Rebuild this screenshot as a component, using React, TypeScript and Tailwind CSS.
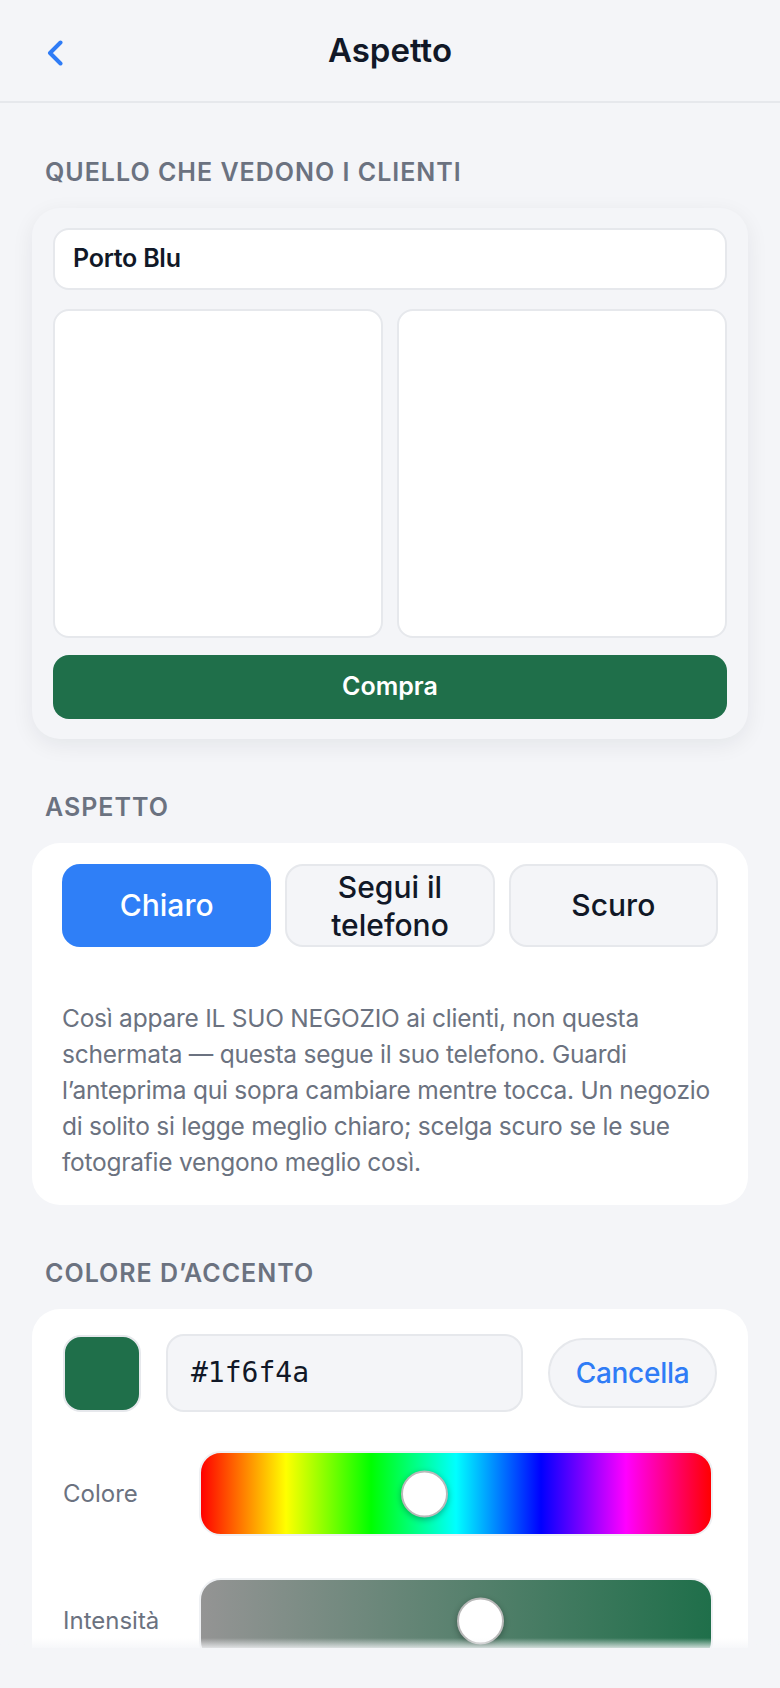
import React from 'react';

const sans = { fontFamily: 'Inter, "Noto Sans", sans-serif' };

function SectionLabel({ children, first }: { children: React.ReactNode; first?: boolean }) {
  return (
    <div
      className={`${first ? '' : 'mt-[52px]'} mb-[20px] pl-[13px] text-[25px] leading-[32px] font-semibold uppercase tracking-[0.04em] text-[#6b7280]`}
    >
      {children}
    </div>
  );
}

function Preview() {
  return (
    <div className="rounded-[28px] bg-[#f4f5f8] px-[21px] pt-[20px] pb-[20px] shadow-[0_6px_22px_rgba(15,23,42,0.07)]">
      <div className="flex h-[62px] items-center rounded-[16px] border-2 border-[#e6e8ec] bg-white px-[18px] text-[25px] font-semibold tracking-[-0.01em] text-[#111827]">
        Porto Blu
      </div>
      <div className="mt-[19px] grid grid-cols-2 gap-[14px]">
        <div className="h-[329px] rounded-[16px] border-2 border-[#e6e8ec] bg-white" />
        <div className="h-[329px] rounded-[16px] border-2 border-[#e6e8ec] bg-white" />
      </div>
      <button className="mt-[17px] flex h-[64px] w-full items-center justify-center rounded-[16px] bg-[#1f6f4a] text-[25px] font-semibold text-white">
        Compra
      </button>
    </div>
  );
}

function ThemePicker() {
  return (
    <div className="rounded-[28px] bg-white px-[30px] pt-[21px] pb-[25px]">
      <div className="grid grid-cols-3 gap-[14px]">
        <button className="flex h-[83px] items-center justify-center rounded-[18px] bg-[#2f7ff7] text-[30px] font-medium text-white">
          Chiaro
        </button>
        <button className="flex h-[83px] items-center justify-center rounded-[18px] border-2 border-[#e6e8ec] bg-[#f4f5f8] text-center text-[30px] leading-[38px] font-medium text-[#111827]">
          Segui il
          <br />
          telefono
        </button>
        <button className="flex h-[83px] items-center justify-center rounded-[18px] border-2 border-[#e6e8ec] bg-[#f4f5f8] text-[30px] font-medium text-[#111827]">
          Scuro
        </button>
      </div>
      <p className="mt-[53px] text-[24.5px] leading-[36px] tracking-[-0.01em] text-[#6b7280]">
        Così appare IL SUO NEGOZIO ai clienti, non questa schermata — questa segue il suo telefono. Guardi
        l’anteprima qui sopra cambiare mentre tocca. Un negozio di solito si legge meglio chiaro; scelga scuro se le
        sue fotografie vengono meglio così.
      </p>
    </div>
  );
}

function Thumb({ left }: { left: number }) {
  return (
    <div
      className="absolute top-1/2 h-[47px] w-[47px] -translate-y-1/2 rounded-full border-2 border-[#b9b9b9] bg-white shadow-[0_2px_6px_rgba(0,0,0,0.3)]"
      style={{ left }}
    />
  );
}

function AccentColor() {
  return (
    <div className="rounded-t-[28px] bg-white px-[31px] pt-[25px] pb-[40px]">
      <div className="flex items-center gap-[25px]">
        <div className="h-[77px] w-[78px] shrink-0 rounded-[18px] border-2 border-[#e6e8ec] bg-[#1f6f4a]" />
        <div
          className="flex h-[78px] flex-1 items-center rounded-[18px] border-2 border-[#e6e8ec] bg-[#f4f5f8] px-[23px] text-[28px] text-[#111827]"
          style={{ fontFamily: '"DejaVu Sans Mono", "Liberation Mono", monospace' }}
        >
          #1f6f4a
        </div>
        <button className="flex h-[70px] w-[169px] shrink-0 items-center justify-center rounded-full border-2 border-[#e6e8ec] bg-[#f4f5f8] text-[28px] font-medium tracking-[-0.01em] text-[#2f7cf6]">
          Cancella
        </button>
      </div>

      <div className="mt-[39px] flex items-center">
        <div className="w-[136px] text-[24px] text-[#6b7280]">Colore</div>
        <div className="relative h-[85px] w-[514px] rounded-[22px] border-2 border-[#eef0f3] bg-[linear-gradient(to_right,#ff0000,#ffff00,#00ff00,#00ffff,#0000ff,#ff00ff,#ff0000)]">
          <Thumb left={200} />
        </div>
      </div>

      <div className="mt-[42px] flex items-center">
        <div className="w-[136px] text-[24px] text-[#6b7280]">Intensità</div>
        <div className="relative h-[85px] w-[514px] rounded-[22px] border-2 border-[#eef0f3] bg-[linear-gradient(to_right,#949494,#1f6f4a)]">
          <Thumb left={256} />
        </div>
      </div>
    </div>
  );
}

export default function App() {
  return (
    <div className="flex h-[1688px] w-full flex-col overflow-hidden bg-[#f4f5f8]" style={sans}>
      <header className="grid h-[103px] shrink-0 grid-cols-[1fr_auto_1fr] items-center border-b-2 border-[#e6e8ec]">
        <button className="pl-[46px] pt-[4px]" aria-label="Indietro">
          <svg width="18" height="26" viewBox="0 0 18 26" fill="none">
            <path d="M14.5 2.5 L4 13 L14.5 23.5" stroke="#2f7cf6" strokeWidth="4" strokeLinecap="round" strokeLinejoin="round" />
          </svg>
        </button>
        <h1 className="text-[33px] font-semibold text-[#111827]">Aspetto</h1>
        <div />
      </header>

      <main className="relative flex-1 overflow-hidden px-[32px] pt-[53px]">
        <SectionLabel first>Quello che vedono i clienti</SectionLabel>
        <Preview />

        <SectionLabel>Aspetto</SectionLabel>
        <ThemePicker />

        <SectionLabel>Colore d’accento</SectionLabel>
        <AccentColor />

        <div className="pointer-events-none absolute inset-x-0 bottom-0 h-[10px] bg-gradient-to-b from-transparent to-[#f4f5f8]/80" />
      </main>

      <div className="h-[40px] shrink-0" />
    </div>
  );
}
